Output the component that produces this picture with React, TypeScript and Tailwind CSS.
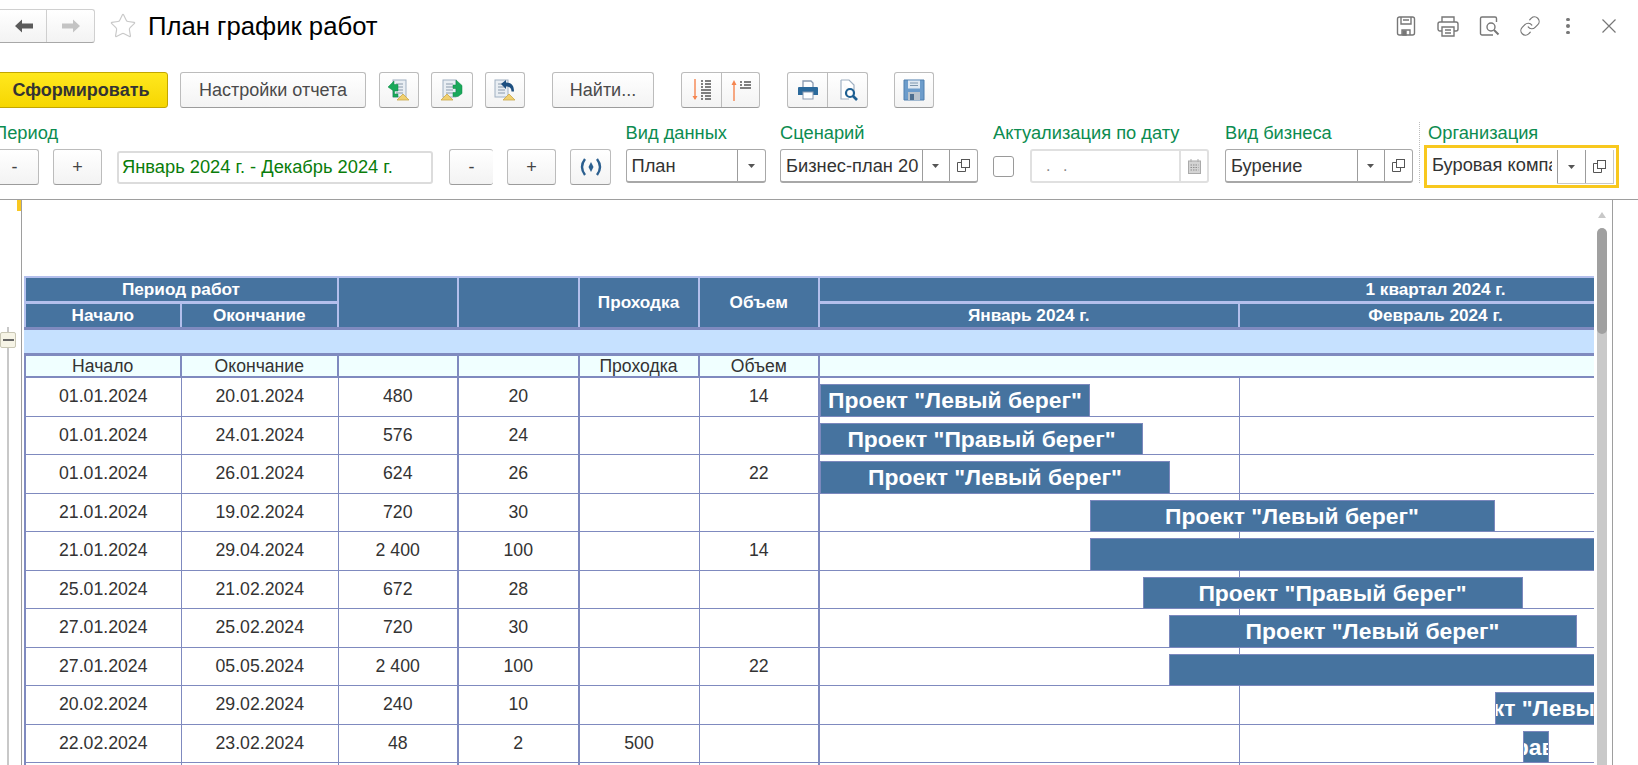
import { Link, Star } from 'lucide-react';
import type { ReactNode } from 'react';

const btn = 'bg-linear-to-b from-white to-[#f3f3f3] border border-[#bcbcbc] border-b-[#9c9c9c] flex items-center justify-center';
const grid = 'grid grid-cols-[156.5px_156.5px_120.5px_120.5px_120px_120.5px_419.5px_392px]';
const label = 'text-[18.3px] leading-[20px] text-[#0c8c50] whitespace-nowrap';
const fieldText = 'text-[18.3px] text-[#333] whitespace-nowrap overflow-hidden';

interface Row {
  start: string;
  end: string;
  hours: string;
  days: string;
  pass?: string;
  vol?: string;
  left: number;
  width: number;
  title?: string;
}

const rows: Row[] = [
  { start: '01.01.2024', end: '20.01.2024', hours: '480', days: '20', vol: '14', left: 0, width: 270, title: 'Проект "Левый берег"' },
  { start: '01.01.2024', end: '24.01.2024', hours: '576', days: '24', left: 0, width: 323, title: 'Проект "Правый берег"' },
  { start: '01.01.2024', end: '26.01.2024', hours: '624', days: '26', vol: '22', left: 0, width: 350, title: 'Проект "Левый берег"' },
  { start: '21.01.2024', end: '19.02.2024', hours: '720', days: '30', left: 269.5, width: 405, title: 'Проект "Левый берег"' },
  { start: '21.01.2024', end: '29.04.2024', hours: '2 400', days: '100', vol: '14', left: 269.5, width: 1350 },
  { start: '25.01.2024', end: '21.02.2024', hours: '672', days: '28', left: 322.5, width: 380, title: 'Проект "Правый берег"' },
  { start: '27.01.2024', end: '25.02.2024', hours: '720', days: '30', left: 348.5, width: 408, title: 'Проект "Левый берег"' },
  { start: '27.01.2024', end: '05.05.2024', hours: '2 400', days: '100', vol: '22', left: 348.5, width: 1350 },
  { start: '20.02.2024', end: '29.02.2024', hours: '240', days: '10', left: 674.5, width: 136, title: 'Проект "Левый берег"' },
  { start: '22.02.2024', end: '23.02.2024', hours: '48', days: '2', pass: '500', left: 702.5, width: 26, title: 'Проект "Правый берег"' },
];

function Arrow({ dir, color }: { dir: 'l' | 'r'; color: string }) {
  return (
    <svg width="20" height="16" viewBox="0 0 20 16" className={dir === 'r' ? 'rotate-180' : ''}>
      <path d="M1 8 8 1.5V5.5H19V10.500H8V14.500Z" fill={color} />
    </svg>
  );
}

function TopIcon({ children, w = 22 }: { children: ReactNode; w?: number }) {
  return (
    <svg width={w} height="22" viewBox="0 0 22 22" fill="none" stroke="#777" strokeWidth="1.4">
      {children}
    </svg>
  );
}

function DocLines({ x = 5, y = 2 }: { x?: number; y?: number }) {
  return (
    <g>
      <rect x={x} y={y} width="13" height="17" fill="#e9eef3" stroke="#9fb0c2" />
      <path d={`M${x + 3} ${y + 4}h7M${x + 3} ${y + 7}h7M${x + 3} ${y + 10}h7M${x + 3} ${y + 13}h7`} stroke="#8a9aab" />
    </g>
  );
}

function Warn({ x, y }: { x: number; y: number }) {
  return <path d={`M${x} ${y}l6-6 6 6z`} fill="#f0d070" stroke="#c9a84a" strokeWidth="0.8" />;
}

function ToolBtn({ children, className = '' }: { children: ReactNode; className?: string }) {
  return <div className={`${btn} h-[36px] rounded-[3px] ${className}`}>{children}</div>;
}

function SideBtns({ pair = true }: { pair?: boolean }) {
  return (
    <>
      <div className="w-[1px] bg-[#9c9c9c] self-stretch" />
      <div className="w-[26.5px] flex items-center justify-center">
        <svg width="7" height="4" viewBox="0 0 7 4"><path d="M0 0h7L3.500 4z" fill="#555" /></svg>
      </div>
      {pair && (
        <>
          <div className="w-[1px] bg-[#9c9c9c] self-stretch" />
          <div className="w-[27px] flex items-center justify-center">
            <svg width="13" height="13" viewBox="0 0 13 13" fill="#fff" stroke="#555">
              <rect x="4.5" y="0.5" width="8" height="8" />
              <path d="M4.5 3.5h-4v9h8v-4" fill="none" />
            </svg>
          </div>
        </>
      )}
    </>
  );
}

function Combo({ text, pair = true, className = '' }: { text: string; pair?: boolean; className?: string }) {
  return (
    <div className={`h-[34px] flex bg-white border border-[#a8a8a8] border-b-2 rounded-[3px] ${className}`}>
      <div className={`${fieldText} flex-1 min-w-0 ml-[5px] mr-[3px] leading-[32px]`}>{text}</div>
      <SideBtns pair={pair} />
    </div>
  );
}

function PlainBtn({ text, className = '' }: { text: string; className?: string }) {
  return (
    <div className={`${btn} h-[36px] rounded-[3px] text-[18px] text-[#444] ${className}`}>{text}</div>
  );
}

function Bar({ row }: { row: Row }) {
  return (
    <div
      className="absolute top-[6px] bottom-[-1px] bg-[#46739f] border border-[#7b88bd] flex items-center justify-center overflow-hidden"
      style={{ left: row.left, width: row.width }}
    >
      {row.title && <span className="shrink-0 whitespace-nowrap text-white font-bold text-[22.9px]">{row.title}</span>}
    </div>
  );
}

export default function App() {
  const headCell = 'flex items-center justify-center text-white font-bold text-[17.2px] bg-[#46739f] border-[#b3bfec] whitespace-nowrap overflow-hidden';
  const subCell = 'flex items-center justify-center text-[17.6px] leading-[20px] text-[#333] border-[#7f8abf]';
  const cell = 'flex items-center justify-center text-[17.7px] text-[#333] border-[#7f8abf]';

  return (
    <div className="w-[1638px] h-[765px] overflow-hidden bg-white font-['Liberation_Sans',sans-serif] text-[#333]">
      {/* title bar */}
      <div className="flex items-center h-[34px] mt-[9px]">
        <div className={`${btn} -ml-[6px] w-[101px] h-[34px] rounded-[3px] border-[#d0d0d0] border-b-[#a8a8a8]`}>
          <div className="w-[51px] flex justify-center pl-[6px]"><Arrow dir="l" color="#5b5b5b" /></div>
          <div className="w-[1px] h-full bg-[#cfcfcf]" />
          <div className="flex-1 flex justify-center"><Arrow dir="r" color="#c4c4c4" /></div>
        </div>
        <Star size={28} strokeWidth={1} className="ml-[14px] text-[#c9c9c9]" />
        <div className="ml-[11px] text-[25.7px] text-black whitespace-nowrap">План график работ</div>
        <div className="ml-auto flex items-center w-[243px]">
          <TopIcon>
            <path d="M2.5 4a2 2 0 0 1 2-2h13a2 2 0 0 1 2 2v14a2 2 0 0 1-2 2h-13a2 2 0 0 1-2-2z" />
            <path d="M6 2v7h10V2M8 5h6M7 20v-5h8v5" />
            <rect x="8" y="16" width="3" height="4" fill="#777" />
          </TopIcon>
          <div className="ml-[20px]">
            <TopIcon>
              <path d="M5 7V2h12v5M5 16H3a2 2 0 0 1-2-2V9a2 2 0 0 1 2-2h16a2 2 0 0 1 2 2v5a2 2 0 0 1-2 2h-2" />
              <path d="M5 12h12v9H5zM8 15h6M8 18h6" />
            </TopIcon>
          </div>
          <div className="ml-[20px]">
            <TopIcon>
              <path d="M14 20H3a1.5 1.5 0 0 1-1.5-1.5v-15A1.5 1.5 0 0 1 3 2h13a1.5 1.5 0 0 1 1.5 1.5V7" />
              <circle cx="12" cy="12" r="4" />
              <path d="m15 15 4.500 4.500" strokeWidth="2" />
            </TopIcon>
          </div>
          <div className="ml-[18px]">
            <Link size={22} strokeWidth={1.3} className="text-[#777]" />
          </div>
          <div className="ml-[25px] flex flex-col gap-[3px]">
            <div className="w-[3.5px] h-[3.5px] rounded-full bg-[#777]" />
            <div className="w-[3.5px] h-[3.5px] rounded-full bg-[#777]" />
            <div className="w-[3.5px] h-[3.5px] rounded-full bg-[#777]" />
          </div>
          <svg width="14" height="14" viewBox="0 0 14 14" stroke="#777" strokeWidth="1.2" className="ml-[32px]">
            <path d="M0.5 0.5l13 13M13.500 0.5l-13 13" />
          </svg>
        </div>
      </div>

      {/* toolbar */}
      <div className="flex items-center h-[36px] mt-[29px]">
        <div className="-ml-[6px] w-[174px] h-[36px] flex items-center justify-center rounded-[3px] border border-[#c2a600] bg-linear-to-b from-[#ffe81c] to-[#f6d600] text-[18px] font-bold text-[#333]">
          Сформировать
        </div>
        <div className={`${btn} ml-[12px] w-[186px] h-[36px] rounded-[3px] text-[18px] text-[#4a4a4a]`}>Настройки отчета</div>
        <ToolBtn className="ml-[13px] w-[40px]">
          <svg width="24" height="24" viewBox="0 0 24 24">
            <DocLines x={6} y={2} />
            <path d="M1 9l6-6v3.500h4V13H7.500v3H11v3H6v-6.500z" fill="#19a85a" stroke="#0f8a45" strokeWidth="0.5" />
            <Warn x={10} y={22} />
          </svg>
        </ToolBtn>
        <ToolBtn className="ml-[12px] w-[42px]">
          <svg width="24" height="24" viewBox="0 0 24 24">
            <DocLines x={3} y={2} />
            <path d="M13 7h3V2l6 5.500v8l-4 3h-5v-4h3v-4h-3z" fill="#19a85a" stroke="#0f8a45" strokeWidth="0.5" />
            <Warn x={1} y={22} />
          </svg>
        </ToolBtn>
        <ToolBtn className="ml-[12px] w-[40px]">
          <svg width="24" height="24" viewBox="0 0 24 24">
            <DocLines x={2} y={2} />
            <path d="M8 6l5-4v2.500c5 0 8 2 8 9h-2.500c0-3.500-2-5-5.500-5V11z" fill="#1d4f80" />
            <Warn x={10} y={22} />
          </svg>
        </ToolBtn>
        <div className={`${btn} ml-[27px] w-[102px] h-[36px] rounded-[3px] text-[18px] text-[#4a4a4a]`}>Найти...</div>
        <div className={`${btn} ml-[27px] w-[79px] h-[36px] rounded-[3px]`}>
          <div className="w-[39px] flex justify-center">
            <svg width="22" height="24" viewBox="0 0 22 24">
              <path d="M4 1v20" stroke="#f5854f" strokeWidth="1.4" fill="none" />
              <path d="M1.500 18 4 22l2.500-4z" fill="#f5854f" />
              <path d="M10 3h2M14 3h6M10 6h2M14 6h6M10 9h2M14 9h6M10 12h10M10 15h10M10 18h2M14 18h6M10 21h2M14 21h6" stroke="#555" strokeWidth="1.300" />
            </svg>
          </div>
          <div className="w-[1px] h-full bg-[#bcbcbc]" />
          <div className="flex-1 flex justify-center">
            <svg width="22" height="24" viewBox="0 0 22 24">
              <path d="M4 23V4" stroke="#f5854f" strokeWidth="1.4" fill="none" />
              <path d="M1.500 7 4 2l2.500 5z" fill="#f5854f" />
              <path d="M10 4h2M14 4h7M10 7h2M14 7h7M10 10h11" stroke="#555" strokeWidth="1.300" />
            </svg>
          </div>
        </div>
        <div className={`${btn} ml-[27px] w-[81px] h-[36px] rounded-[3px]`}>
          <div className="w-[39px] flex justify-center">
            <svg width="24" height="24" viewBox="0 0 24 24">
              <path d="M7 9V3h8l2 2v4" fill="#fff" stroke="#8a9ab0" strokeWidth="1.300" />
              <path d="M3 9h18a1 1 0 0 1 1 1v7H2v-7a1 1 0 0 1 1-1z" fill="#2c6a9c" />
              <rect x="7" y="14" width="10" height="7" fill="#fff" stroke="#8a9ab0" />
            </svg>
          </div>
          <div className="w-[1px] h-full bg-[#bcbcbc]" />
          <div className="flex-1 flex justify-center">
            <svg width="24" height="24" viewBox="0 0 24 24">
              <path d="M5 2h8l5 5v8M5 2v19h8" fill="#fff" stroke="#9fb0c2" strokeWidth="1.200" />
              <circle cx="14" cy="15" r="4" fill="#fff" stroke="#1d5f92" strokeWidth="2.200" />
              <path d="m17 18 4 4" stroke="#1d5f92" strokeWidth="2.600" />
            </svg>
          </div>
        </div>
        <ToolBtn className="ml-[26px] w-[40px]">
          <svg width="24" height="24" viewBox="0 0 24 24">
            <path d="M2 2h20v20H2z" fill="#6c9ccb" stroke="#4e7fae" />
            <rect x="6" y="2.500" width="12" height="8" fill="#dfe8f1" />
            <path d="M8 5h8M8 7.500h8" stroke="#7f97ae" />
            <rect x="6" y="14" width="12" height="8" fill="#b9c3cc" />
            <rect x="8" y="16" width="4" height="6" fill="#4e6f8f" />
          </svg>
        </ToolBtn>
      </div>

      {/* filters */}
      <div className="flex h-[81px] mt-[10px] pt-[5px]">
        <div className="flex flex-col -ml-[10px] w-[635.5px]">
          <div className={`${label} pl-[4px]`}>Период</div>
          <div className="flex mt-[6px]">
            <PlainBtn text="-" className="w-[49px]" />
            <PlainBtn text="+" className="ml-[14px] w-[49px]" />
            <div className="ml-[15px] w-[316px] h-[33px] mt-[2px] border-2 border-[#dcdcdc] rounded-[3px] pl-[3px] leading-[28px] text-[18.3px] text-[#0a7d0a] whitespace-nowrap">
              Январь 2024 г. - Декабрь 2024 г.
            </div>
            <PlainBtn text="-" className="ml-[16px] w-[44px] border-r-0" />
            <PlainBtn text="+" className="ml-[14px] w-[49px]" />
            <div className={`${btn} ml-[14px] w-[41px] h-[36px] rounded-[3px]`}>
              <svg width="24" height="18" viewBox="0 0 24 18" fill="none" stroke="#2b5f8f" strokeWidth="2.400">
                <path d="M6 1Q0 9 6 17M18 1Q24 9 18 17" />
                <path d="M12 4l2.500 5-2.500 5-2.500-5z" fill="#2b5f8f" stroke="none" />
              </svg>
            </div>
          </div>
        </div>
        <div className="w-[154.5px] flex flex-col">
          <div className={label}>Вид данных</div>
          <Combo text="План" pair={false} className="mt-[6px] w-[140px]" />
        </div>
        <div className="w-[213px] flex flex-col">
          <div className={label}>Сценарий</div>
          <Combo text="Бизнес-план 2024" className="mt-[6px] w-[198px]" />
        </div>
        <div className="w-[232px] flex flex-col">
          <div className={label}>Актуализация по дату</div>
          <div className="flex items-center mt-[6px] h-[34px]">
            <div className="w-[21px] h-[21px] rounded-[3px] border border-[#9a9a9a]" />
            <div className="ml-[16px] w-[179px] h-[34px] flex border-2 border-[#e0e0e0] rounded-[3px]">
              <div className="flex-1 text-[16px] text-[#888] pl-[14px] leading-[30px] tracking-[4px]">. .</div>
              <div className="w-[2px] bg-[#e0e0e0]" />
              <div className="w-[26px] flex items-center justify-center">
                <svg width="13" height="15" viewBox="0 0 13 15">
                  <rect x="0.5" y="2" width="12" height="12.500" fill="#d4d4d4" stroke="#aaa" />
                  <path d="M3 0v3M10 0v3" stroke="#aaa" />
                  <path d="M2.500 6h8M2.500 8.500h8M2.500 11h8" stroke="#8f8f8f" strokeDasharray="1.500 1" />
                </svg>
              </div>
            </div>
          </div>
        </div>
        <div className="w-[194px] flex flex-col">
          <div className={label}>Вид бизнеса</div>
          <Combo text="Бурение" className="mt-[6px] w-[188px]" />
        </div>
        <div className="w-[1px] h-[61px] -mt-[1px] border-l border-dotted border-[#bdbdbd]" />
        <div className="flex flex-col ml-[4px]">
          <div className={`${label} pl-[4px]`}>Организация</div>
          <div className="mt-[2px] w-[194.5px] h-[43px] border-[3px] border-[#f8c81e] flex pl-[5px] pr-[2px] pt-[2px]">
            <div className={`${fieldText} w-[124px] mr-[5px] leading-[30px]`}>Буровая компания</div>
            <div className="flex h-[34px] border-r border-b border-[#c8c8c8]">
              <SideBtns />
            </div>
          </div>
        </div>
      </div>

      {/* report panel */}
      <div className="flex h-[566px] border-t border-[#9e9e9e] overflow-hidden">
        <div className="relative w-[21px] shrink-0">
          <div className="absolute right-0 top-0 w-[4px] h-[11px] bg-[#f9c821]" />
          <div className="absolute left-[7px] top-[127px] bottom-0 w-[2px] bg-[#c8c8c8]" />
          <div className="absolute left-0 top-[132px] w-[16px] h-[16px] bg-[#f6f4e6] border border-[#c9c7b5] rounded-[2px] flex items-center justify-center">
            <div className="w-[11px] h-[2px] bg-[#666]" />
          </div>
        </div>
        <div className="flex w-[1592px] border-l border-r border-[#9e9e9e]">
          <div className="w-[1571.5px] pl-[1.5px] pt-[76px] overflow-hidden shrink-0">
            <div className="w-[1570px]">
              {/* header */}
              <div className={`${grid} grid-rows-[26px_23px] border-t-2 border-l-2 border-[#b3bfec]`}>
                <div className={`${headCell} col-span-2 border-r-2 border-b-[3px]`}>Период работ</div>
                <div className={`${headCell} row-span-2 border-r-2`} />
                <div className={`${headCell} row-span-2 border-r-2`} />
                <div className={`${headCell} row-span-2 border-r-2`}>Проходка</div>
                <div className={`${headCell} row-span-2 border-r-2`}>Объем</div>
                <div className={`${headCell} col-span-2 border-b-[3px] justify-start`}>
                  <div className="w-[1231px] shrink-0 text-center">1 квартал 2024 г.</div>
                </div>
                <div className={`${headCell} border-r-2`}>Начало</div>
                <div className={`${headCell} border-r-2`}>Окончание</div>
                <div className={`${headCell} border-r-2`}>Январь 2024 г.</div>
                <div className={headCell}>Февраль 2024 г.</div>
              </div>

              <div className="h-[29px] bg-[#c6e1ff] border-y-[3px] border-[#7f8abf]" />

              <div className={`${grid} h-[22px] bg-[#f0ffff] border-b-2 border-l-2 border-[#7f8abf]`}>
                <div className={`${subCell} border-r-2`}>Начало</div>
                <div className={`${subCell} border-r-2`}>Окончание</div>
                <div className={`${subCell} border-r-2`} />
                <div className={`${subCell} border-r-2`} />
                <div className={`${subCell} border-r-2`}>Проходка</div>
                <div className={`${subCell} border-r-2`}>Объем</div>
              </div>

              {/* rows */}
              {rows.map((r, i) => (
                <div key={i} className={`${grid} h-[38.5px] border-b border-l-2 border-[#7f8abf]`}>
                  <div className={`${cell} border-r`}>{r.start}</div>
                  <div className={`${cell} border-r`}>{r.end}</div>
                  <div className={`${cell} border-r-2`}>{r.hours}</div>
                  <div className={`${cell} border-r-2`}>{r.days}</div>
                  <div className={`${cell} border-r`}>{r.pass}</div>
                  <div className={`${cell} border-r-2`}>{r.vol}</div>
                  <div className="col-span-2 relative flex">
                    <div className="w-[419.5px] border-r border-[#7f8abf]" />
                    <Bar row={r} />
                  </div>
                </div>
              ))}
              <div className={`${grid} h-[38.5px] border-l-2 border-[#7f8abf]`}>
                <div className="border-r border-[#7f8abf]" />
                <div className="border-r border-[#7f8abf]" />
                <div className="border-r-2 border-[#7f8abf]" />
                <div className="border-r-2 border-[#7f8abf]" />
                <div className="border-r border-[#7f8abf]" />
                <div className="border-r-2 border-[#7f8abf]" />
                <div className="border-r border-[#7f8abf]" />
              </div>
            </div>
          </div>
          {/* scrollbar */}
          <div className="w-[10px] ml-[3px] shrink-0 flex flex-col items-center pt-[12px]">
            <svg width="8" height="6" viewBox="0 0 8 6"><path d="M4 0l4 6H0z" fill="#c8c8c8" /></svg>
            <div className="w-[10px] mt-[10px] flex-1 rounded-t-[5px] bg-[#c9c9c9] overflow-hidden">
              <div className="h-[106px] bg-[#a0a0a0] rounded-[5px]" />
            </div>
          </div>
        </div>
      </div>
    </div>
  );
}
